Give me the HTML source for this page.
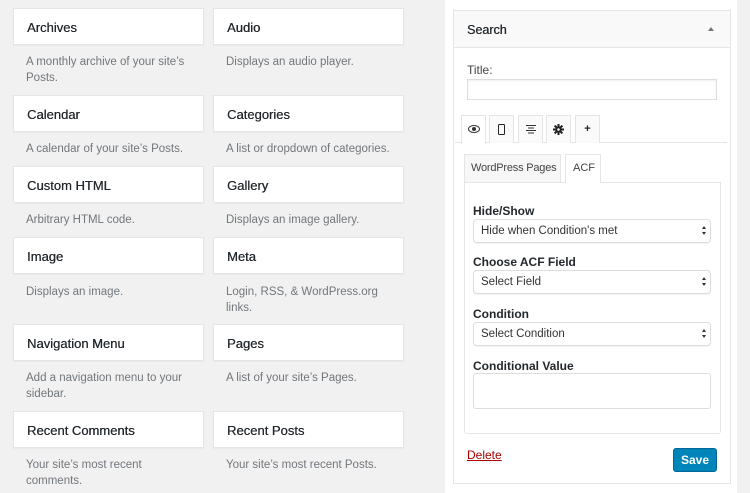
<!DOCTYPE html>
<html><head><style>
*{box-sizing:border-box;margin:0;padding:0}
body{width:750px;height:493px;background:#f1f1f1;font-family:"Liberation Sans",sans-serif;position:relative;overflow:hidden;color:#23282d}
.a{position:absolute}
.card{position:absolute;width:191px;height:37px;background:#fff;border:1px solid #e5e5e5;box-shadow:0 1px 1px rgba(0,0,0,.04);font-size:13px;color:#23282d;padding:11px 0 0 13px;text-shadow:0.3px 0 0 #23282d}
.desc{position:absolute;font-size:11.5px;color:#72777c;line-height:15.5px;width:160px}
.lbl{position:absolute;left:473px;font-size:12px;color:#23282d;font-weight:bold}
.sel{position:absolute;left:473px;width:238px;height:24px;border:1px solid #ddd;border-radius:4px;background:#fff;font-size:11.5px;color:#333;padding:5px 0 0 7px;box-shadow:0 1px 1px rgba(0,0,0,.05)}
.sel:after{content:"";position:absolute;right:4px;top:6px;width:0;height:0;border:2.5px solid transparent;border-bottom:3px solid #333;border-top:0}
.sel:before{content:"";position:absolute;right:4px;top:12px;width:0;height:0;border:2.5px solid transparent;border-top:3px solid #333;border-bottom:0}
.it{position:absolute;top:115px;height:28px;width:25px;border:1px solid #e5e5e5;border-bottom:none;background:#fff;font-size:11px;text-align:center;line-height:27px}
</style></head><body>
<div class="card" style="left:13px;top:8px">Archives</div>
<div class="card" style="left:213px;top:8px">Audio</div>
<div class="desc" style="left:26px;top:55px">A monthly archive of your site’s Posts.</div>
<div class="desc" style="left:226px;top:55px">Displays an audio player.</div>
<div class="card" style="left:13px;top:95px">Calendar</div>
<div class="card" style="left:213px;top:95px">Categories</div>
<div class="desc" style="left:26px;top:142px;width:180px">A calendar of your site’s Posts.</div>
<div class="desc" style="left:226px;top:142px;width:180px">A list or dropdown of categories.</div>
<div class="card" style="left:13px;top:166px">Custom HTML</div>
<div class="card" style="left:213px;top:166px">Gallery</div>
<div class="desc" style="left:26px;top:213px">Arbitrary HTML code.</div>
<div class="desc" style="left:226px;top:213px">Displays an image gallery.</div>
<div class="card" style="left:13px;top:237px">Image</div>
<div class="card" style="left:213px;top:237px">Meta</div>
<div class="desc" style="left:26px;top:285px">Displays an image.</div>
<div class="desc" style="left:226px;top:285px;width:175px">Login, RSS, &amp; WordPress.org links.</div>
<div class="card" style="left:13px;top:324px">Navigation Menu</div>
<div class="card" style="left:213px;top:324px">Pages</div>
<div class="desc" style="left:26px;top:371px">Add a navigation menu to your sidebar.</div>
<div class="desc" style="left:226px;top:371px">A list of your site’s Pages.</div>
<div class="card" style="left:13px;top:411px">Recent Comments</div>
<div class="card" style="left:213px;top:411px">Recent Posts</div>
<div class="desc" style="left:26px;top:458px;width:140px">Your site’s most recent comments.</div>
<div class="desc" style="left:226px;top:458px;width:180px">Your site’s most recent Posts.</div>

<div class="a" style="left:445px;top:0;width:292px;height:493px;background:#fff"></div>
<div class="a" style="left:453px;top:10px;width:278px;height:474px;border:1px solid #e5e5e5;background:#fff"></div>
<div class="a" style="left:454px;top:11px;width:276px;height:37px;background:#f9f9f9;border-bottom:1px solid #e5e5e5;font-size:12.5px;padding:12px 0 0 13px;text-shadow:0.3px 0 0 #23282d">Search</div>
<div class="a" style="left:708px;top:27px;width:0;height:0;border:3.5px solid transparent;border-bottom:4px solid #777;border-top:0"></div>
<div class="a" style="left:467px;top:63px;font-size:12px;color:#444">Title:</div>
<div class="a" style="left:467px;top:79px;width:250px;height:21px;border:1px solid #ddd;box-shadow:inset 0 1px 2px rgba(0,0,0,.07)"></div>
<div class="a" style="left:455px;top:142px;width:272px;height:1px;background:#e5e5e5"></div>
<div class="it" style="left:461px;height:29px">
<svg width="12" height="8" viewBox="0 0 12 8" style="vertical-align:middle"><ellipse cx="6" cy="4" rx="5.5" ry="3.5" fill="#fff" stroke="#333" stroke-width="1"/><circle cx="6" cy="4" r="2" fill="#333"/></svg></div>
<div class="it" style="left:489px;background:#fafafa"><svg width="7" height="11" viewBox="0 0 7 11" style="vertical-align:middle"><rect x=".5" y=".5" width="6" height="10" rx="1" fill="none" stroke="#222"/></svg></div>
<div class="it" style="left:518px;background:#fafafa"><svg width="10" height="10" viewBox="0 0 10 10" style="vertical-align:middle"><path d="M0 1.5H10M2 4H8M0 6.5H10M2 9H8" stroke="#333"/></svg></div>
<div class="it" style="left:546px;background:#fafafa"><svg width="11" height="11" viewBox="0 0 12 12" style="vertical-align:middle"><g stroke="#222" stroke-width="2.2"><path d="M6 0V12M0 6H12M1.8 1.8L10.2 10.2M10.2 1.8L1.8 10.2"/></g><circle cx="6" cy="6" r="3.5" fill="#222"/><circle cx="6" cy="6" r="1.4" fill="#fafafa"/></svg></div>
<div class="it" style="left:575px;background:#fafafa;font-weight:bold">+</div>
<div class="a" style="left:464px;top:154px;width:97px;height:28px;border:1px solid #e5e5e5;border-bottom:none;background:#f7f7f7;font-size:11px;color:#444;padding:7px 0 0 6px;white-space:nowrap;letter-spacing:-0.2px">WordPress Pages</div>
<div class="a" style="left:565px;top:154px;width:36px;height:29px;border:1px solid #e5e5e5;border-bottom:none;background:#fff;font-size:11px;color:#444;padding:7px 0 0 7px;z-index:2">ACF</div>
<div class="a" style="left:464px;top:182px;width:257px;height:252px;border:1px solid #e5e5e5;border-radius:0 0 3px 3px"></div>
<div class="lbl" style="top:204px">Hide/Show</div>
<div class="sel" style="top:219px">Hide when Condition's met</div>
<div class="lbl" style="top:255px">Choose ACF Field</div>
<div class="sel" style="top:270px">Select Field</div>
<div class="lbl" style="top:307px">Condition</div>
<div class="sel" style="top:322px">Select Condition</div>
<div class="lbl" style="top:359px">Conditional Value</div>
<div class="a" style="left:473px;top:373px;width:238px;height:36px;border:1px solid #ddd;border-radius:3px"></div>
<div class="a" style="left:467px;top:448px;font-size:12px;color:#a00;text-decoration:underline">Delete</div>
<div class="a" style="left:673px;top:448px;width:44px;height:24px;background:#0085ba;border:1px solid #006799;border-radius:3px;color:#fff;font-size:12px;font-weight:bold;text-align:center;line-height:22px">Save</div>
</body></html>
